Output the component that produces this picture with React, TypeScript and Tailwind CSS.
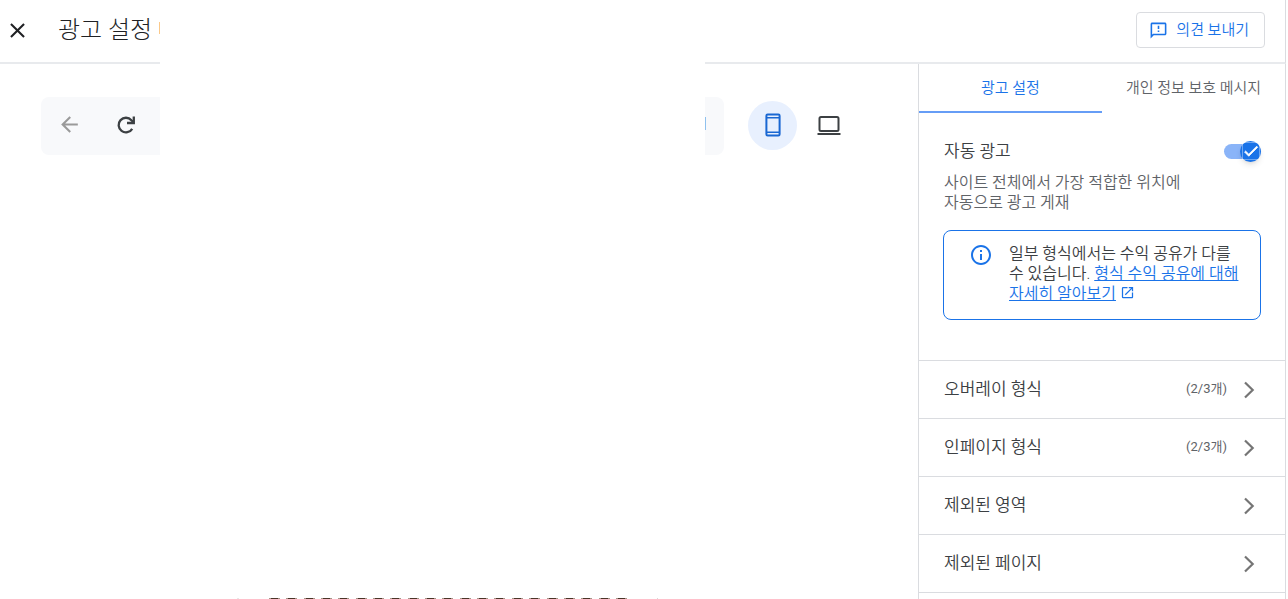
import { useState } from "react";
import {
  MdArrowBack,
  MdCheck,
  MdClose,
  MdOpenInNew,
  MdOutlineFeedback,
  MdOutlineInfo,
} from "react-icons/md";

const sections = [
  { title: "오버레이 형식", count: "(2/3개)" },
  { title: "인페이지 형식", count: "(2/3개)" },
  { title: "제외된 영역" },
  { title: "제외된 페이지" },
];

function ReloadIcon() {
  return (
    <svg viewBox="0 0 24 24" className="size-6" fill="none" stroke="currentColor" strokeWidth="2.3" aria-hidden="true">
      <path d="M18.2 15.8A7.3 7.3 0 1 1 17.4 7.2L19.6 9.4" />
      <path d="M19.8 3.6V10H13" />
    </svg>
  );
}

function PhoneIcon() {
  return (
    <svg viewBox="0 0 24 24" className="size-6" fill="none" stroke="currentColor" aria-hidden="true">
      <rect x="5.4" y="1.6" width="13.2" height="20.8" rx="1.2" strokeWidth="2" />
      <path d="M5.5 4.8H18.5M5.5 19.2H18.5" strokeWidth="1.6" />
    </svg>
  );
}

function LaptopIcon() {
  return (
    <svg viewBox="0 0 24 24" className="size-6" fill="none" stroke="currentColor" strokeWidth="2" aria-hidden="true">
      <rect x="2.5" y="4" width="19" height="14" rx="1.5" />
      <path d="M0.5 21H23.5" />
    </svg>
  );
}

function ChevronIcon() {
  return (
    <svg viewBox="0 0 12 18" className="h-[18px] w-3 text-[#757575]" fill="none" stroke="currentColor" strokeWidth="2.2" aria-hidden="true">
      <path d="M2 1.5L9.7 9L2 16.5" />
    </svg>
  );
}

export default function App() {
  const [autoAds, setAutoAds] = useState(true);

  return (
    <div className="relative flex h-screen flex-col overflow-hidden bg-white pr-[2px] font-['Roboto','Noto_Sans_CJK_KR',sans-serif] font-[350] text-[#3c4043]">
      <header className="flex h-16 shrink-0 items-center justify-between border-r border-b-2 border-r-[#dadce0] border-b-[#e8eaed] pr-5 pb-0.5">
        <div className="flex items-center gap-7 pl-[5px]">
          <button aria-label="닫기" className="text-[#202124]">
            <MdClose className="size-[25px]" />
          </button>
          <h1 className="text-2xl font-light text-[#202124]">광고 설정</h1>
        </div>
        <button className="flex h-9 items-center gap-2 rounded border border-[#dadce0] pr-[15px] pl-3 text-[15px] text-[#1a73e8]">
          <MdOutlineFeedback className="size-[19px]" />
          의견 보내기
        </button>
      </header>

      <div className="flex min-h-0 flex-1">
        <main className="flex-1 px-[41px] pt-[33px]">
          <div className="flex items-center gap-6">
            <div className="flex h-[58px] w-[683px] items-center gap-8 rounded-lg bg-[#f8f9fb] px-4 pb-[3px]">
              <button aria-label="뒤로" className="text-[#9a9a9a]">
                <MdArrowBack className="size-[25px]" />
              </button>
              <button aria-label="새로고침" className="text-[#3c4043]">
                <ReloadIcon />
              </button>
            </div>
            <div className="flex shrink-0 items-center gap-5 pb-0.5">
              <button aria-label="모바일" className="flex size-[49px] items-center justify-center rounded-full bg-[#e8f0fe] text-[#1967d2]">
                <PhoneIcon />
              </button>
              <button aria-label="데스크톱" className="text-[#3c4043]">
                <LaptopIcon />
              </button>
            </div>
          </div>
        </main>

        <aside className="w-[368px] shrink-0 border-x border-[#dadce0]">
          <div role="tablist" className="grid h-[49px] grid-cols-2 text-[15px]">
            <button role="tab" aria-selected="true" className="border-b-2 border-[#669df6] pt-0.5 text-[#1a73e8]">
              광고 설정
            </button>
            <button role="tab" aria-selected="false" className="border-b-2 border-transparent pt-0.5 whitespace-nowrap text-[#5f6368]">
              개인 정보 보호 메시지
            </button>
          </div>

          <section className="h-[247px] px-6 pt-6">
            <div className="flex items-center justify-between">
              <label htmlFor="auto-ads" className="pl-px text-[17px] leading-7">
                자동 광고
              </label>
              <span className="relative flex h-5 w-[37px] items-center">
                <input
                  id="auto-ads"
                  type="checkbox"
                  role="switch"
                  checked={autoAds}
                  onChange={(e) => setAutoAds(e.target.checked)}
                  className="peer h-[15px] w-full appearance-none rounded-full bg-[#bdc1c6] checked:bg-[#8ab4f8]"
                />
                <span className="pointer-events-none absolute left-0 flex size-[21px] items-center justify-center rounded-full bg-[#1a73e8] text-white shadow-md peer-checked:right-0 peer-checked:left-auto">
                  <MdCheck className="size-[18px] stroke-current stroke-1" />
                </span>
              </span>
            </div>
            <p className="mt-2 pl-px text-base leading-5 text-[#5f6368]">
              사이트 전체에서 가장 적합한 위치에
              <br />
              자동으로 광고 게재
            </p>
            <div className="mt-[17px] flex h-[90px] gap-4 rounded-lg border border-[#1a73e8] pt-3 pl-[25px]">
              <MdOutlineInfo className="size-6 shrink-0 text-[#1a73e8]" />
              <p className="pt-px text-base leading-5 whitespace-nowrap">
                일부 형식에서는 수익 공유가 다를
                <br />수 있습니다.{" "}
                <a href="#revenue-share" className="text-[#1a73e8] underline">
                  형식 수익 공유에 대해
                  <br />
                  자세히 알아보기
                </a>
                <MdOpenInNew className="mb-1 ml-1 inline size-[15px] text-[#1a73e8]" />
              </p>
            </div>
          </section>

          <ul className="border-b border-[#dadce0]">
            {sections.map((s) => (
              <li key={s.title}>
                <button className="flex h-[58px] w-full items-center border-t border-[#dadce0] pr-[30px] pl-[25px] text-left">
                  <span className="flex-1 text-[17px]">{s.title}</span>
                  <span className="mr-4 pb-0.5 text-[13px] font-normal text-[#5f6368]">{s.count}</span>
                  <ChevronIcon />
                </button>
              </li>
            ))}
          </ul>
        </aside>
      </div>

      <div className="absolute inset-y-0 left-[159px] flex w-[547px] flex-col justify-between">
        <div className="absolute inset-y-0 right-px left-px bg-white" />
        <span className="mt-[22px] h-3 w-px bg-[#fbc98a]" />
        <div className="relative flex items-end justify-between pr-12 pl-[78px]">
          <span className="h-px w-[2px] bg-[#e8e8e8]" />
          <div className="flex w-[358px] justify-between">
            {Array.from({ length: 21 }, (_, i) => (
              <span key={i} className="h-px w-[11px] border-x-2 border-[#a89488] bg-[#4a3428]" />
            ))}
          </div>
          <span className="h-px w-px bg-[#d8d8d8]" />
        </div>
        <span className="absolute top-[117px] right-0 h-[13px] w-px bg-[#8fc1ee]" />
      </div>
    </div>
  );
}
